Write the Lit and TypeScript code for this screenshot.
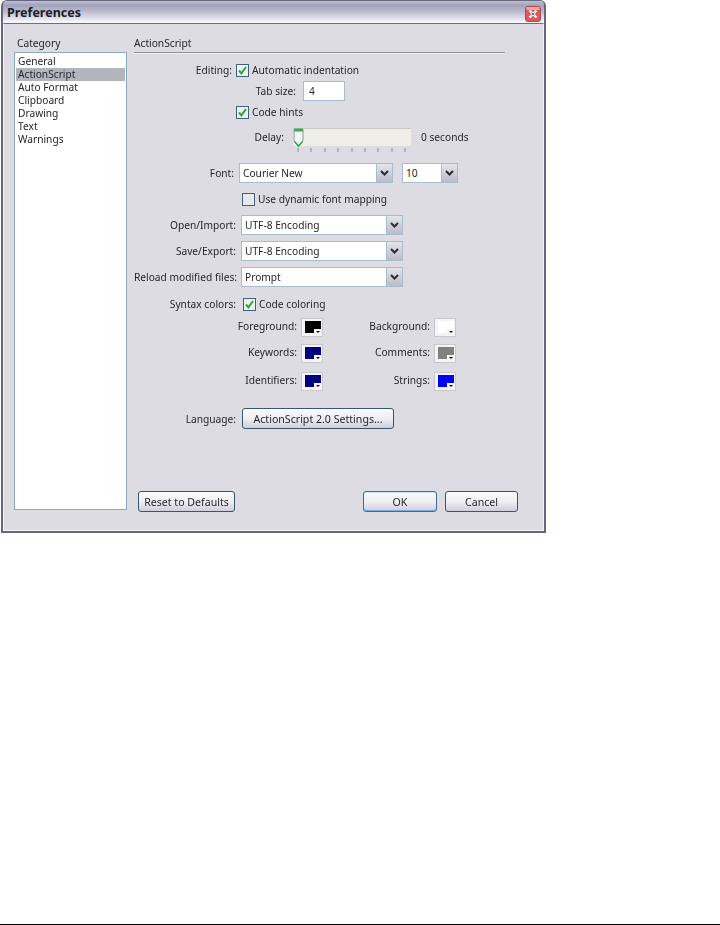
import { LitElement, html, css, svg } from "lit";
import { customElement } from "lit/decorators.js";

const CATEGORIES = ["General", "ActionScript", "Auto Format", "Clipboard", "Drawing", "Text", "Warnings"];

@customElement("app-root")
export class AppRoot extends LitElement {
  static styles = css`
    :host { display: block; font-family: "Noto Sans", Arial, sans-serif; font-size: 10.2px; color: #26262c; }
    * { box-sizing: border-box; }
    .page { height: 925px; border-bottom: 1px solid #000; background: #fff; }
    .window { width: 545px; height: 533px; margin-left: 1px; border: 2px solid #66667e; border-top-width: 1px; border-radius: 6px 6px 0 0; background: #dcdce2; display: flex; flex-direction: column; filter: blur(0.25px); }
    .title { height: 22px; flex: none; display: flex; align-items: flex-end; justify-content: space-between; padding: 0 3px 0 4px; border-bottom: 2px solid #f6f6fa;
      background: linear-gradient(#c0c0d2 0, #a2a2bc 22%, #bdbdd0 55%, #f0f0f6 100%); border-radius: 4px 4px 0 0; }
    .title span { font-size: 12.5px; line-height: 18px; font-weight: bold; color: #1d1d24; margin-bottom: -1px; }
    .close { width: 16px; height: 16px; margin-bottom: -1px; }
    .client { flex: 1; border: 1px solid #f4f4f8; border-top: 1px solid #6d6d85; display: grid; grid-template-columns: 113px 1fr; column-gap: 7px; padding: 12px 0 0 10px; position: relative; }
    .cat-label { height: 16px; line-height: 14px; padding-left: 3px; }
    .list { width: 113px; height: 458px; border: 1px solid #8aa9c4; background: #fff; padding: 2px 1px 0 1px; }
    .list div { height: 13px; line-height: 13px; padding-left: 2px; }
    .list .sel { background: #b4b4bc; }
    .main { display: flex; flex-direction: column; position: relative; }
    .head { height: 17px; line-height: 14px; width: 371px; border-bottom: 1px solid #909098; box-shadow: 0 1px 0 #f2f2f6; }
    .row { display: flex; align-items: center; height: 20px; }
    .lab { flex: none; text-align: right; white-space: nowrap; }
    .check { width: 13px; height: 13px; flex: none; margin-right: 3px; }
    .input { height: 20px; background: #fff; border: 1px solid #a9bccd; padding-left: 5px; line-height: 18px; }
    .select { display: flex; height: 20px; background: #fff; border: 1px solid #a9bccd; align-items: center; padding: 0 0 0 3px; justify-content: space-between; }
    .arrow { width: 16px; height: 18px; background: linear-gradient(#e4e4ea, #bcbcc8); border-left: 1px solid #a9bccd; display: flex; align-items: center; justify-content: center; }
    .track { width: 118px; height: 18px; background: #efefe7; position: relative; border-top: 1px solid #c9c9c2; }
    .thumb { position: absolute; left: 0; top: -1px; width: 11px; height: 20px; }
    .ticks { display: flex; gap: 10.4px; margin-left: 163px; height: 5px; }
    .ticks i { width: 3px; height: 4px; border-left: 2px solid #b4b4ba; display: block; }
    .swatches { display: grid; grid-template-columns: 167px 22px 111px 22px; grid-template-rows: 26px 28px 19px; align-items: start; }
    .swl { text-align: right; padding-right: 4px; line-height: 17px; }
    .sw { width: 22px; height: 19px; background: #f4f4f6; border: 1px solid #c8c8d0; position: relative; padding: 2px 1px 2px 3px; }
    .sw b { display: block; width: 16px; height: 12px; }
    .sw::before { content: ""; position: absolute; right: 1px; bottom: 2px; width: 7px; height: 5px; background: #f4f4f6; }
    .sw::after { content: ""; position: absolute; right: 2px; bottom: 3px; width: 0; height: 0; border: 2.5px solid transparent; border-top-color: #111; border-bottom-width: 0; }
    .btn { height: 21px; border: 1px solid #38566f; border-radius: 3px; background: linear-gradient(#fbfbfd, #eeeef3 50%, #cfcfdc); display: flex; align-items: center; justify-content: center; color: #26262c; font: inherit; font-size: 10.6px; padding: 0; }
    .footer { display: flex; position: absolute; left: 4px; top: 455px; width: 380px; }
    .ok { border-color: #3c6ca8; box-shadow: inset 0 -1px 0 #7fa8dc, inset 0 1px 0 #cfe0f4; }
    .spacer { flex: 1; }
  `;

  private check(on: boolean) {
    return html`<svg class="check" viewBox="0 0 13 13">
      <rect x=".5" y=".5" width="12" height="12" fill="${on ? "#eef0f0" : "#e8e8ee"}" stroke="#3f6179"/>
      ${on ? svg`<path d="M3 6.5 L5.4 9.3 L10 3" fill="none" stroke="#27a83a" stroke-width="2"/>` : ""}
    </svg>`;
  }

  private arrow() {
    return html`<span class="arrow"><svg width="9" height="6" viewBox="0 0 9 6"><path d="M1 1 L4.5 4.5 L8 1" fill="none" stroke="#2b2b33" stroke-width="2"/></svg></span>`;
  }

  private select(text: string, width: number) {
    return html`<div class="select" style="width:${width}px"><span>${text}</span>${this.arrow()}</div>`;
  }

  private swatch(color: string) {
    return html`<div class="sw"><b style="background:${color}"></b></div>`;
  }

  render() {
    return html`<div class="page">
      <div class="window">
        <div class="title">
          <span>Preferences</span>
          <svg class="close" viewBox="0 0 16 16">
            <rect x=".5" y=".5" width="15" height="15" rx="2.5" fill="#d9595f" stroke="#b2474f"/>
            <rect x="1.5" y="1" width="13" height="3" fill="#e9a89a"/>
            <path d="M4.5 4.5 L11.5 11.5 M11.5 4.5 L4.5 11.5" stroke="#fff" stroke-width="2.4"/>
            <path d="M6.5 6.5 L9.5 9.5 M9.5 6.5 L6.5 9.5" stroke="#333" stroke-width=".7"/>
          </svg>
        </div>
        <div class="client">
          <div>
            <div class="cat-label">Category</div>
            <div class="list">
              ${CATEGORIES.map((c, i) => html`<div class="${i === 1 ? "sel" : ""}">${c}</div>`)}
            </div>
          </div>
          <div class="main">
            <div class="head">ActionScript</div>
            <div class="row" style="margin-top:7px">
              <span class="lab" style="width:98px;margin-right:4px">Editing:</span>
              ${this.check(true)}<span>Automatic indentation</span>
            </div>
            <div class="row" style="margin-top:1px">
              <span class="lab" style="width:162px;margin-right:7px">Tab size:</span>
              <div class="input" style="width:42px">4</div>
            </div>
            <div class="row" style="margin-top:1px">
              <span style="width:102px"></span>${this.check(true)}<span>Code hints</span>
            </div>
            <div class="row" style="margin-top:5px">
              <span class="lab" style="width:150px;margin-right:9px">Delay:</span>
              <div class="track"><svg class="thumb" viewBox="0 0 11 20"><path d="M1 1.5 H10 V13 L5.5 18.5 L1 13 Z" fill="#f2f2f0" stroke="#8a98a8"/><path d="M1 2 H10" fill="none" stroke="#3fa858" stroke-width="3"/><path d="M1.5 13.5 L5.5 18 L9.5 13.5" fill="none" stroke="#3fa858" stroke-width="1.6"/></svg></div>
              <span style="margin-left:10px">0 seconds</span>
            </div>
            <div class="ticks" style="margin-top:1px">
              ${Array.from({ length: 9 }).map(() => html`<i></i>`)}
            </div>
            <div class="row" style="margin-top:10px">
              <span class="lab" style="width:100px;margin-right:5px">Font:</span>
              ${this.select("Courier New", 154)}
              <span style="width:9px"></span>
              ${this.select("10", 56)}
            </div>
            <div class="row" style="margin-top:6px">
              <span style="width:108px"></span>${this.check(false)}<span>Use dynamic font mapping</span>
            </div>
            <div class="row" style="margin-top:6px">
              <span class="lab" style="width:102px;margin-right:5px">Open/Import:</span>${this.select("UTF-8 Encoding", 162)}
            </div>
            <div class="row" style="margin-top:6px">
              <span class="lab" style="width:102px;margin-right:5px">Save/Export:</span>${this.select("UTF-8 Encoding", 162)}
            </div>
            <div class="row" style="margin-top:6px">
              <span class="lab" style="width:102px;margin-right:5px">Reload modified files:</span>${this.select("Prompt", 162)}
            </div>
            <div class="row" style="margin-top:7px">
              <span class="lab" style="width:102px;margin-right:7px">Syntax colors:</span>${this.check(true)}<span>Code coloring</span>
            </div>
            <div class="swatches" style="margin-top:4px">
              <span class="swl">Foreground:</span>${this.swatch("#000")}<span class="swl">Background:</span>${this.swatch("#fff")}
              <span class="swl">Keywords:</span>${this.swatch("#000080")}<span class="swl">Comments:</span>${this.swatch("#808080")}
              <span class="swl">Identifiers:</span>${this.swatch("#000080")}<span class="swl">Strings:</span>${this.swatch("#0000ff")}
            </div>
            <div class="row" style="margin-top:17px;height:21px">
              <span class="lab" style="width:102px;margin-right:6px">Language:</span>
              <button class="btn" style="width:152px">ActionScript 2.0 Settings...</button>
            </div>
            <div class="footer">
              <button class="btn" style="width:97px">Reset to Defaults</button>
              <span class="spacer"></span>
              <button class="btn ok" style="width:74px">OK</button>
              <span style="width:8px"></span>
              <button class="btn" style="width:73px">Cancel</button>
            </div>
          </div>
        </div>
      </div>
    </div>`;
  }
}
